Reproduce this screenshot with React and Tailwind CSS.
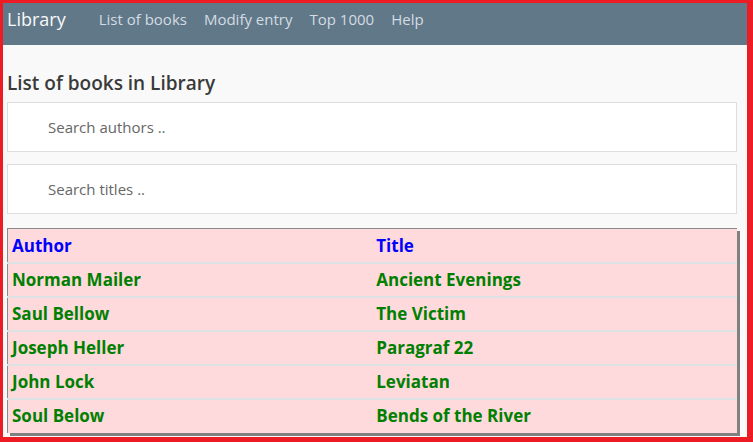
import React, { useState } from 'react';

const books = [
    { author: 'Norman Mailer', title: 'Ancient Evenings' },
    { author: 'Saul Bellow', title: 'The Victim' },
    { author: 'Joseph Heller', title: 'Paragraf 22' },
    { author: 'John Lock', title: 'Leviatan' },
    { author: 'Soul Below', title: 'Bends of the River' },
];

const navLinks = ['List of books', 'Modify entry', 'Top 1000', 'Help'];

function App() {
    const [authorQuery, setAuthorQuery] = useState('');
    const [titleQuery, setTitleQuery] = useState('');

    const filtered = books.filter(b =>
        b.author.toLowerCase().includes(authorQuery.toLowerCase()) &&
        b.title.toLowerCase().includes(titleQuery.toLowerCase())
    );

    return (
        <div
            className="h-[442px] w-[753px] overflow-hidden border-b-[5px] border-l-[3px] border-r-[6px] border-t-[3px] border-[#ed1c24] bg-[#f9f9f9]"
            style={{ fontFamily: '"Open Sans", "Noto Sans", sans-serif' }}
        >
            {/* Navbar */}
            <nav className="flex h-[42px] items-center bg-[#617888] px-1 pb-[10px]">
                <a className="mr-[33px] text-[18px] text-[#f7f9fa]">Library</a>
                <ul className="flex gap-[17px]">
                    {navLinks.map(link => (
                        <li key={link} className="text-[15px] text-[#d3dce3]">{link}</li>
                    ))}
                </ul>
            </nav>

            <div className="pl-1 pr-[10px]">
                <h2 className="mt-[26px] text-[19px] font-semibold leading-6 text-[#3a3a3a]">
                    List of books in Library
                </h2>

                <input
                    value={authorQuery}
                    onChange={e => setAuthorQuery(e.target.value)}
                    placeholder="Search authors .."
                    className="mt-[7px] block h-[50px] w-full border border-[#dddddd] bg-white pl-[40px] text-[15px] text-[#555] outline-none placeholder:text-[#666]"
                />
                <input
                    value={titleQuery}
                    onChange={e => setTitleQuery(e.target.value)}
                    placeholder="Search titles .."
                    className="mt-[12px] block h-[50px] w-full border border-[#dddddd] bg-white pl-[40px] text-[15px] text-[#555] outline-none placeholder:text-[#666]"
                />

                <table className="mt-[14px] w-full table-fixed border-collapse border-l border-t border-[#8a8a8a] bg-[#ffdadd] shadow-[3px_3px_0_#808080]">
                    <thead>
                        <tr className="h-[34px] border-b-2 border-[#dde2e4]">
                            <th className="px-1 text-left text-[17px] font-bold text-[#0000ff]">Author</th>
                            <th className="px-1 text-left text-[17px] font-bold text-[#0000ff]">Title</th>
                        </tr>
                    </thead>
                    <tbody>
                        {filtered.map((book, i) => (
                            <tr
                                key={book.author}
                                className={`h-[34px] ${i < filtered.length - 1 ? 'border-b-2 border-[#dde2e4]' : ''}`}
                            >
                                <td className="px-1 text-[17px] font-bold text-[#008000]">{book.author}</td>
                                <td className="px-1 text-[17px] font-bold text-[#008000]">{book.title}</td>
                            </tr>
                        ))}
                    </tbody>
                </table>
            </div>
        </div>
    );
}

export default App;
